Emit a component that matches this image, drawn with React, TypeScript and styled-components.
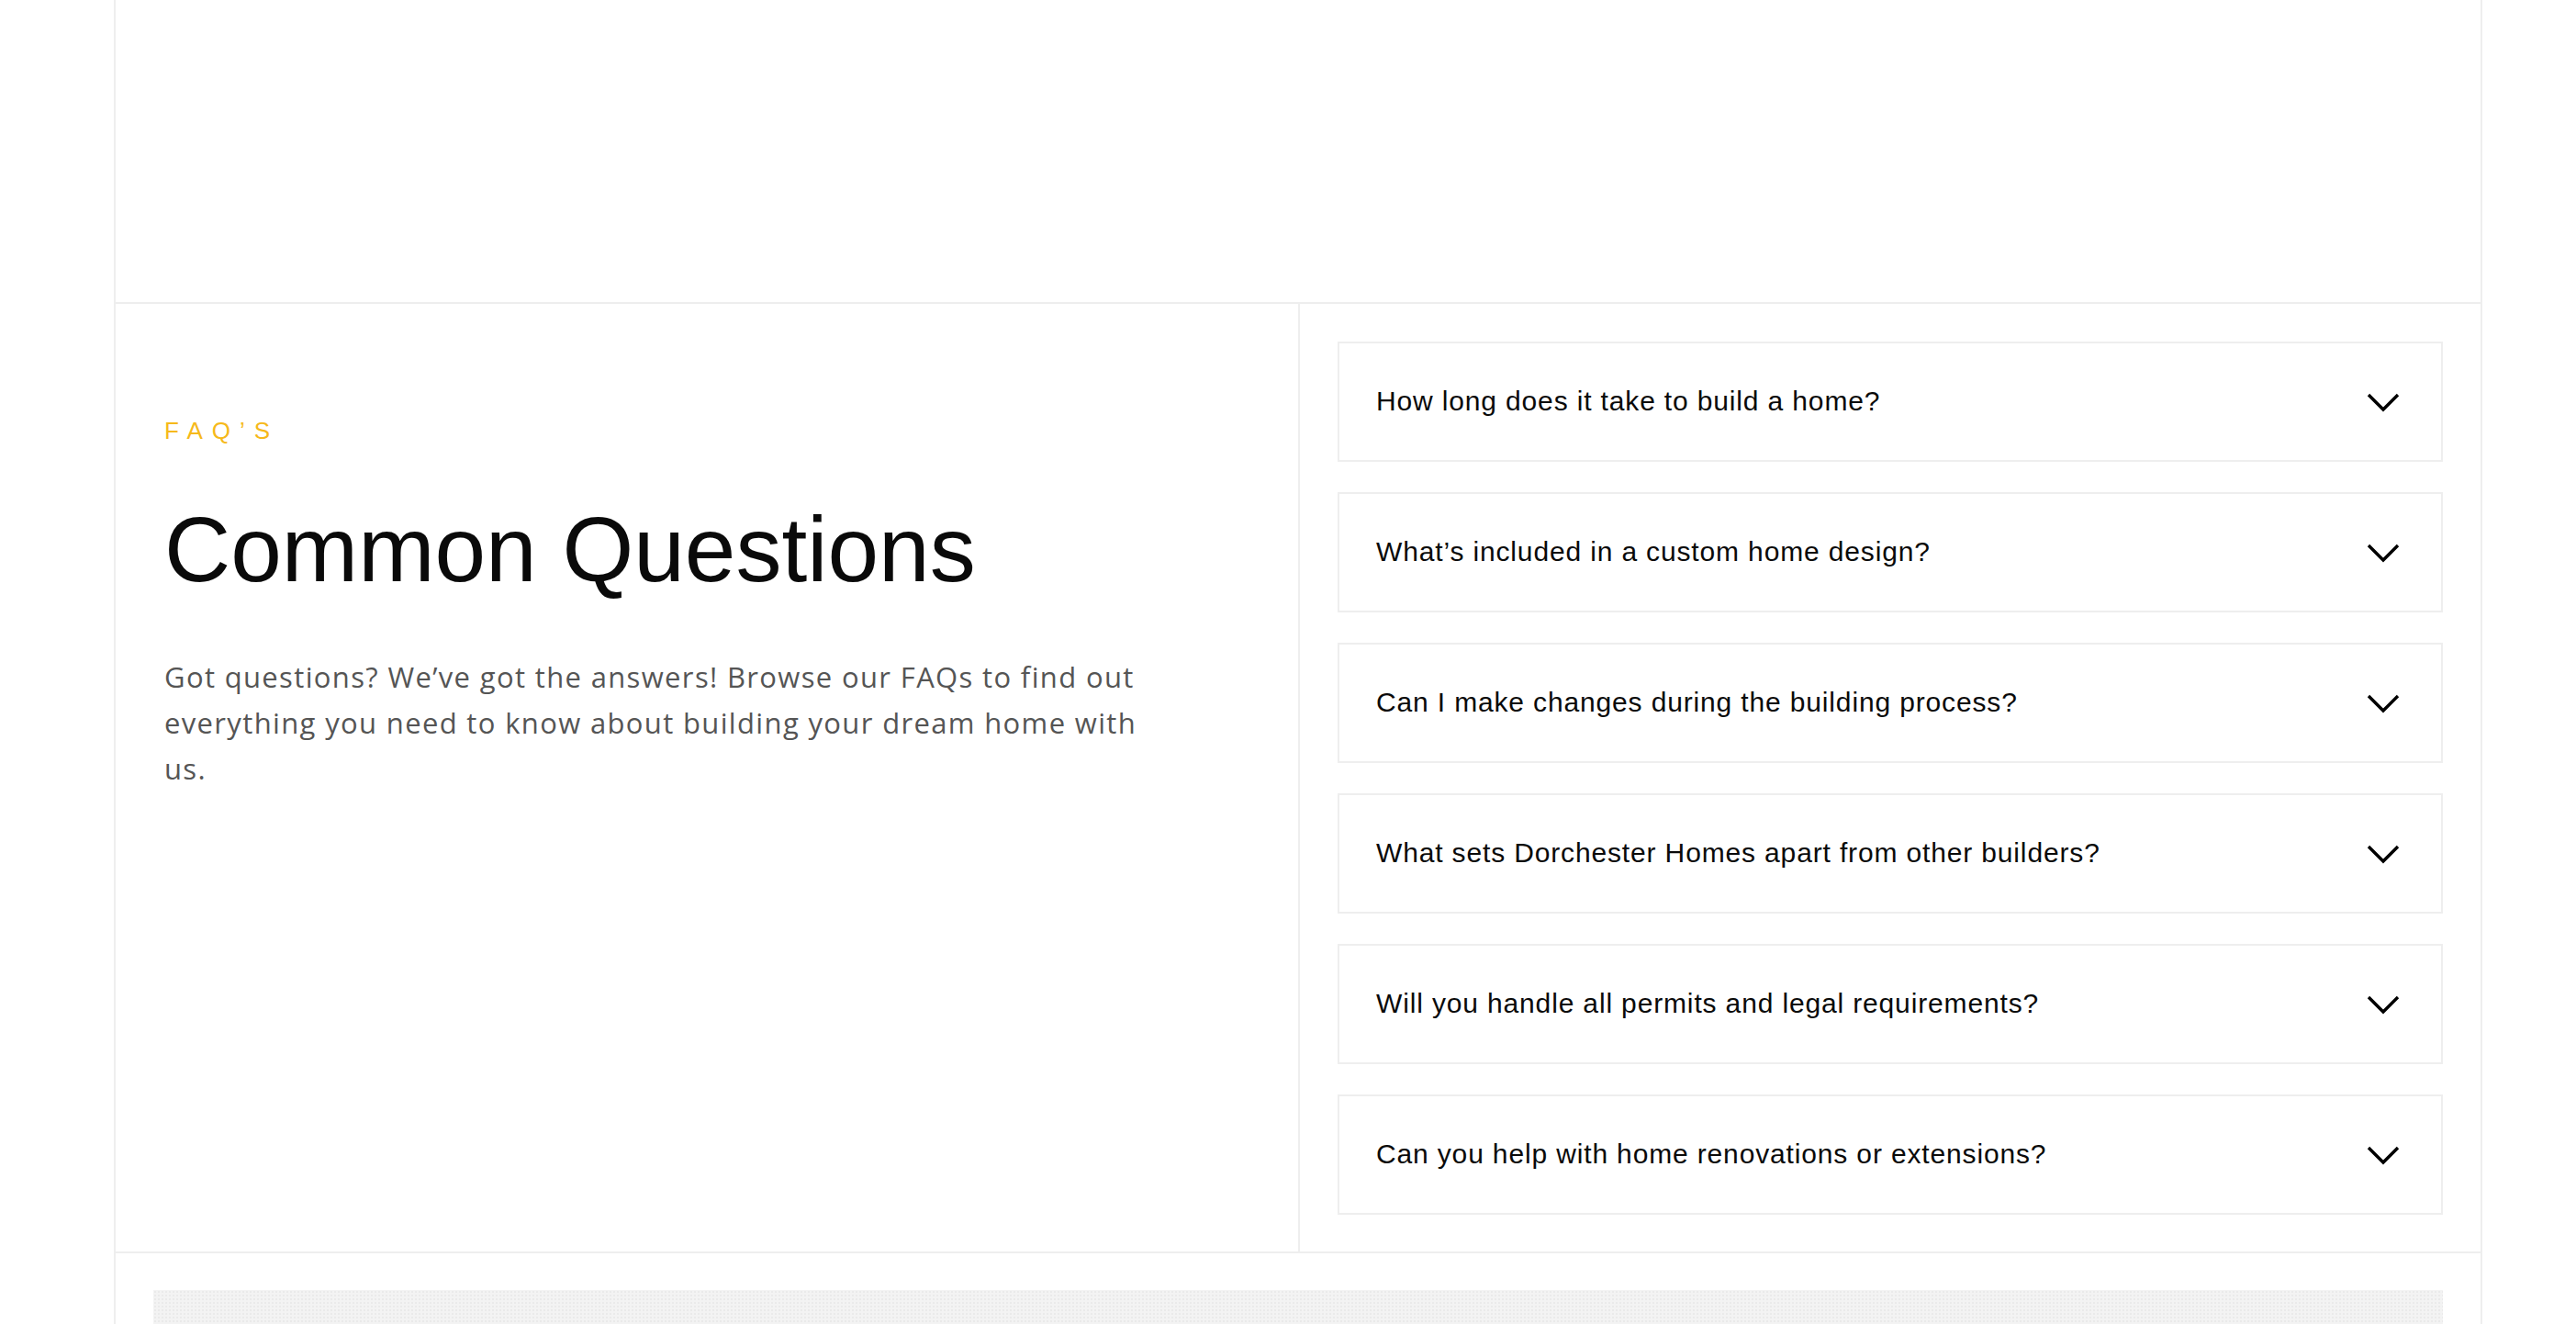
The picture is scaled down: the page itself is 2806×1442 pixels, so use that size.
import React from "react";
import styled, { createGlobalStyle } from "styled-components";

const GlobalStyle = createGlobalStyle`
  html, body {
    margin: 0;
    padding: 0;
    background: #ffffff;
  }
  body {
    font-family: "Liberation Sans", Arial, sans-serif;
    color: #000;
    overflow: hidden;
  }
`;

const Frame = styled.div`
  margin-left: 124px;
  width: 2580px;
  box-sizing: border-box;
  border-left: 2px solid #eeeeee;
  border-right: 2px solid #eeeeee;
`;

const TopBand = styled.div`
  height: 329px;
  border-bottom: 2px solid #eeeeee;
`;

const FaqSection = styled.section`
  display: grid;
  grid-template-columns: 1fr 1fr;
  border-bottom: 2px solid #eeeeee;
`;

const IntroColumn = styled.div`
  padding: 125px 40px 0 53px;
`;

const Eyebrow = styled.div`
  font-family: "Liberation Sans", Arial, sans-serif;
  font-size: 26px;
  line-height: 26px;
  letter-spacing: 10px;
  color: #f6b91a;
  text-transform: uppercase;
`;

const Heading = styled.h2`
  margin: 67px 0 0;
  font-family: "Liberation Sans", Arial, sans-serif;
  font-weight: 400;
  font-size: 100px;
  line-height: 99px;
  color: #0a0a0a;
  letter-spacing: 0;
`;

const Lead = styled.p`
  margin: 64px 0 0;
  max-width: 1100px;
  font-family: "Open Sans", "Liberation Sans", sans-serif;
  font-weight: 400;
  font-size: 31px;
  line-height: 50px;
  letter-spacing: 1.35px;
  color: #555555;
`;

const QuestionColumn = styled.div`
  border-left: 2px solid #eeeeee;
  padding: 41px 41px 40px;
  display: flex;
  flex-direction: column;
  gap: 33px;
`;

const QuestionItem = styled.button`
  display: flex;
  align-items: center;
  justify-content: space-between;
  height: 131px;
  box-sizing: border-box;
  width: 100%;
  padding: 0 45px 0 40px;
  background: #ffffff;
  border: 2px solid #eeeeee;
  cursor: pointer;
  text-align: left;
`;

const QuestionText = styled.span`
  font-family: "Liberation Sans", Arial, sans-serif;
  font-size: 30px;
  letter-spacing: 0.85px;
  color: #0a0a0a;
  transform: translateY(-1px);
`;

const Chevron = styled.svg`
  width: 36px;
  height: 22px;
  flex: none;
`;

const NextSection = styled.div`
  padding: 40px 41px 0;
`;

const GreyPanel = styled.div`
  height: 37px;
  background-color: #f3f3f3;
  background-image: radial-gradient(rgba(0, 0, 0, 0.035) 1px, transparent 1px);
  background-size: 4px 4px;
`;

const questions = [
  "How long does it take to build a home?",
  "What’s included in a custom home design?",
  "Can I make changes during the building process?",
  "What sets Dorchester Homes apart from other builders?",
  "Will you handle all permits and legal requirements?",
  "Can you help with home renovations or extensions?",
];

const ChevronIcon = () => (
  <Chevron viewBox="0 0 36 22" aria-hidden="true">
    <path
      d="M2 3 L18 19 L34 3"
      fill="none"
      stroke="#000"
      strokeWidth="3.4"
      strokeLinejoin="miter"
    />
  </Chevron>
);

export default function App() {
  return (
    <>
      <GlobalStyle />
      <Frame>
        <TopBand />
        <FaqSection>
          <IntroColumn>
            <Eyebrow>FAQ’S</Eyebrow>
            <Heading>Common Questions</Heading>
            <Lead>
              Got questions? We’ve got the answers! Browse our FAQs to find out
              everything you need to know about building your dream home with
              us.
            </Lead>
          </IntroColumn>
          <QuestionColumn>
            {questions.map((q) => (
              <QuestionItem key={q} type="button">
                <QuestionText>{q}</QuestionText>
                <ChevronIcon />
              </QuestionItem>
            ))}
          </QuestionColumn>
        </FaqSection>
        <NextSection>
          <GreyPanel />
        </NextSection>
      </Frame>
    </>
  );
}
